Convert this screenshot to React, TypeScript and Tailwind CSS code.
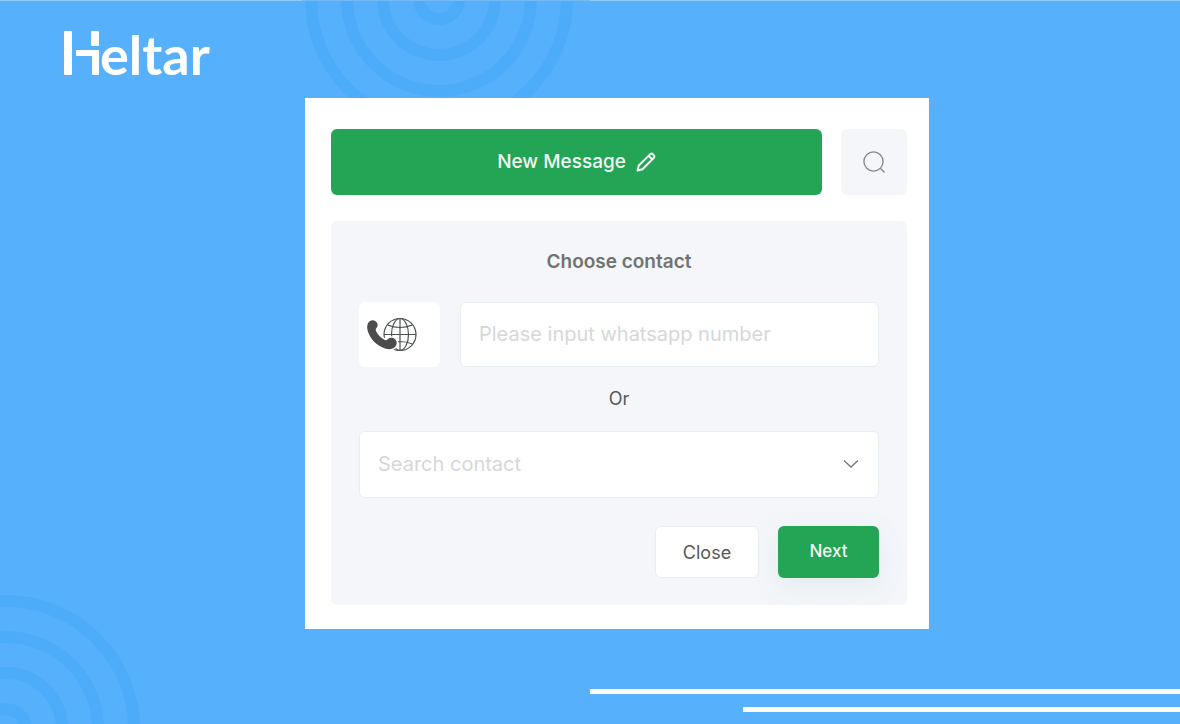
import type { ReactNode } from "react";

function Rings({ className }: { className: string }) {
  return (
    <svg viewBox="0 0 268 268" className={className} aria-hidden="true">
      <g fill="none" stroke="#4cacf9" strokeWidth="12">
        <circle cx="134" cy="134" r="20" />
        <circle cx="134" cy="134" r="56" />
        <circle cx="134" cy="134" r="92" />
        <circle cx="134" cy="134" r="128" />
      </g>
    </svg>
  );
}

function Logo() {
  return (
    <a href="#" aria-label="Heltar" className="flex h-12 items-end text-white">
      <svg width="36" height="48" viewBox="0 0 36 48" fill="currentColor" aria-hidden="true">
        <rect x="0" y="2" width="8" height="44" rx="1" />
        <path d="M12 21h23v24a1 1 0 0 1-1 1h-5a1 1 0 0 1-1-1V27H13a1 1 0 0 1-1-1z" />
        <rect x="27" y="2" width="8" height="15" rx="1" />
      </svg>
      <span className="text-[54px] font-bold leading-11 font-[Lato,sans-serif]">eltar</span>
    </a>
  );
}

function PencilIcon() {
  return (
    <svg width="20" height="20" viewBox="0 0 20 20" fill="none" stroke="currentColor" strokeWidth="2" strokeLinejoin="round" aria-hidden="true">
      <path d="M1.500 18.500l1.300-5L14.300 2.100a1.600 1.600 0 0 1 2.300 0l1.300 1.300a1.600 1.600 0 0 1 0 2.300L6.500 17.200z" />
      <path d="M12.600 3.800l3.600 3.600" />
    </svg>
  );
}

function SearchIcon() {
  return (
    <svg width="24" height="24" viewBox="0 0 24 24" fill="none" stroke="#848a86" strokeWidth="1.3" aria-hidden="true">
      <circle cx="11.5" cy="11.5" r="9.6" />
      <path d="M18.3 18.3l4.200 4.200" />
    </svg>
  );
}

function PhoneGlobeIcon() {
  return (
    <svg width="52" height="36" viewBox="0 0 52 36" aria-hidden="true">
      <g fill="none" stroke="#4c514e" strokeWidth="1.200">
        <circle cx="33" cy="17.500" r="16" />
        <ellipse cx="33" cy="17.500" rx="8.500" ry="16" />
        <path d="M33 1.500v32M17 17.500h32M20.500 8q12.500 5 25 0M20.500 27q12.500-5 25 0" />
      </g>
      <path
        d="M1.500 5.500C3 3.200 6.500 2.300 8.900 4.400c2.200 2 2.300 4.600.6 6.600-.9 1-1 1.800-.5 2.900 1.800 3.900 4.900 7 8.900 9 1 .5 1.800.2 2.500-.5 2-2 5.400-2.200 7.600-.2 2.100 1.900 2.300 5 .4 7.200-2.300 2.800-6.300 3.400-10.400 2C10 28.800 3.500 22.500 1 14.800-.1 11.500-.2 8.200 1.500 5.500z"
        fill="#4c4c4c"
        stroke="#fff"
        strokeWidth="3"
        paintOrder="stroke"
      />
    </svg>
  );
}

function ActionButton({ className, children }: { className: string; children: ReactNode }) {
  return (
    <button type="button" className={`h-[52px] rounded-md ${className}`}>
      {children}
    </button>
  );
}

export default function App() {
  return (
    <div className="relative isolate flex min-h-screen flex-col overflow-hidden bg-[#57b0fc] font-[Inter,sans-serif]">
      <Rings className="absolute -top-[135px] left-[305px] -z-10 size-[268px]" />
      <Rings className="absolute -bottom-[139px] -left-[128px] -z-10 size-[268px]" />
      <div className="flex h-px">
        <div className="w-[302px] bg-[#95cbf8]" />
        <div className="w-[288px] bg-[#75bcf6]" />
        <div className="flex-1 bg-[#95cbf8]" />
      </div>

      <header className="px-16 pt-7">
        <Logo />
      </header>

      <main className="flex justify-center pt-[21px] pl-[54px]">
        <section className="w-full max-w-[624px] bg-white pt-[31px] pr-[22px] pb-6 pl-[26px]">
          <div className="flex gap-[19px]">
            <button
              type="button"
              className="flex h-[66px] flex-1 items-center justify-center gap-2.5 rounded-md bg-[#24a455] text-[19px] font-medium text-[#f1f8f3]"
            >
              New Message
              <PencilIcon />
            </button>
            <button
              type="button"
              aria-label="Search"
              className="flex size-[66px] items-center justify-center rounded-md bg-[#f4f6fa]"
            >
              <SearchIcon />
            </button>
          </div>

          <form className="mt-[26px] rounded-md bg-[#f4f6fa] px-7 pt-[29px] pb-[27px]" onSubmit={(e) => e.preventDefault()}>
            <h1 className="text-center text-[19px] leading-6 font-semibold text-[#707371]">Choose contact</h1>
            <div className="mt-7 flex gap-5">
              <button
                type="button"
                aria-label="Country code"
                className="flex h-[65px] w-[81px] items-center rounded-md bg-white pl-2"
              >
                <PhoneGlobeIcon />
              </button>
              <input
                type="tel"
                aria-label="Whatsapp number"
                placeholder="Please input whatsapp number"
                className="h-[65px] min-w-0 flex-1 rounded-md border border-[#e8eff3] bg-white px-[18px] pb-0.5 text-[20px] placeholder:text-[#d5d9d6]"
              />
            </div>
            <p className="py-5 text-center text-[18px] leading-6 text-[#555a57]">Or</p>
            <div className="relative">
              <select
                aria-label="Search contact"
                defaultValue=""
                className="h-[67px] w-full appearance-none rounded-md border border-[#e8eff3] bg-white px-[18px] pb-0.5 text-[20px] text-[#d5d9d6]"
              >
                <option value="">Search contact</option>
              </select>
              <svg
                width="16"
                height="10"
                viewBox="0 0 16 10"
                fill="none"
                stroke="#6f7a75"
                strokeWidth="1.3"
                className="pointer-events-none absolute top-7 right-5"
                aria-hidden="true"
              >
                <path d="M1 1.500l7 6.500 7-6.500" />
              </svg>
            </div>
            <div className="mt-7 flex justify-end gap-[19px]">
              <ActionButton className="w-[104px] border border-[#e8eff3] bg-white text-[18px] text-[#555a57]">Close</ActionButton>
              <ActionButton className="w-[101px] bg-[#24a455] text-[17px] font-medium text-[#f1f8f3] shadow-[0_8px_28px_rgba(60,140,120,0.1)]">
                Next
              </ActionButton>
            </div>
          </form>
        </section>
      </main>

      <footer className="mt-auto flex flex-col items-end gap-[13px] pb-3">
        <div className="h-[5px] w-1/2 bg-white" />
        <div className="h-[5px] w-[37%] bg-white" />
      </footer>
    </div>
  );
}
